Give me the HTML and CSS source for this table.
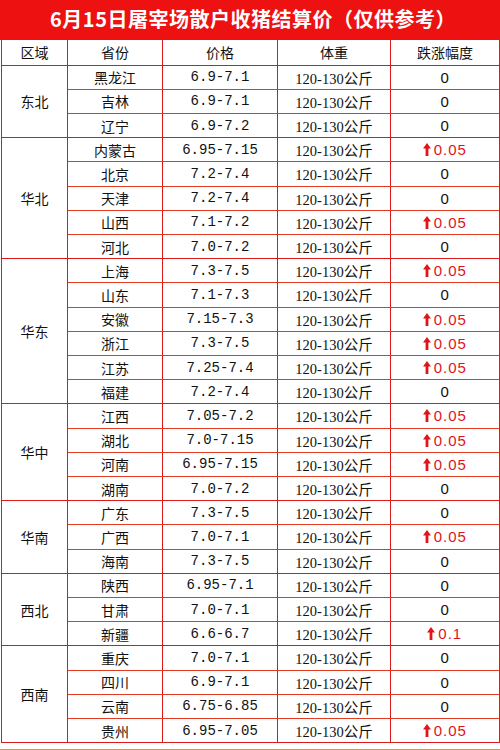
FILE: index.html
```html
<!DOCTYPE html>
<html lang="zh">
<head>
<meta charset="utf-8">
<link rel="stylesheet" href="styles.css">
</head>
<body>
<div class="page">
  <div class="title">6月15日屠宰场散户收猪结算价（仅供参考）</div>
  <table class="grid">
    <colgroup>
      <col class="c1"><col class="c2"><col class="c3"><col class="c4"><col class="c5">
    </colgroup>
    <thead>
      <tr><th>区域</th><th>省份</th><th>价格</th><th>体重</th><th>跌涨幅度</th></tr>
    </thead>
    <tbody id="body"></tbody>
  </table>
  <div class="foot"></div>
</div>
<script src="app.js"></script>
</body>
</html>
```

FILE: app.js
```js
const data = [
  ["东北", [["黑龙江","6.9-7.1",""],["吉林","6.9-7.1",""],["辽宁","6.9-7.2",""]]],
  ["华北", [["内蒙古","6.95-7.15","0.05"],["北京","7.2-7.4",""],["天津","7.2-7.4",""],["山西","7.1-7.2","0.05"],["河北","7.0-7.2",""]]],
  ["华东", [["上海","7.3-7.5","0.05"],["山东","7.1-7.3",""],["安徽","7.15-7.3","0.05"],["浙江","7.3-7.5","0.05"],["江苏","7.25-7.4","0.05"],["福建","7.2-7.4",""]]],
  ["华中", [["江西","7.05-7.2","0.05"],["湖北","7.0-7.15","0.05"],["河南","6.95-7.15","0.05"],["湖南","7.0-7.2",""]]],
  ["华南", [["广东","7.3-7.5",""],["广西","7.0-7.1","0.05"],["海南","7.3-7.5",""]]],
  ["西北", [["陕西","6.95-7.1",""],["甘肃","7.0-7.1",""],["新疆","6.6-6.7","0.1"]]],
  ["西南", [["重庆","7.0-7.1",""],["四川","6.9-7.1",""],["云南","6.75-6.85",""],["贵州","6.95-7.05","0.05"]]]
];
const arrow = '<svg class="arrow" viewBox="0 0 8 13" width="8" height="13"><path d="M4 0 L8 5.5 L5.4 5.5 L5.4 13 L2.6 13 L2.6 5.5 L0 5.5 Z" fill="#e0141a"/></svg>';
const body = document.getElementById("body");
let html = "";
data.forEach(([region, rows]) => {
  rows.forEach((r, i) => {
    const last = i === rows.length - 1;
    html += '<tr class="' + (last ? "grp-end" : "") + '">';
    if (i === 0) html += '<td class="region" rowspan="' + rows.length + '">' + region + '</td>';
    html += '<td class="prov">' + r[0] + '</td>';
    html += '<td class="price">' + r[1] + '</td>';
    html += '<td class="weight">120-130公斤</td>';
    if (r[2]) html += '<td class="chg up">' + arrow + '<span>' + r[2] + '</span></td>';
    else html += '<td class="chg">0</td>';
    html += '</tr>';
  });
});
body.innerHTML = html;
```

FILE: styles.css
```css
html, body {
  margin: 0;
  padding: 0;
  background: #fff;
}
.page {
  width: 500px;
  height: 750px;
  overflow: hidden;
}
.title {
  height: 40px;
  background: #ee1111;
  color: #fff;
  font-family: "Noto Sans CJK SC", "Liberation Sans", sans-serif;
  font-weight: 700;
  font-size: 20px;
  line-height: 38px;
  text-align: center;
  letter-spacing: 0.5px;
  padding-left: 6px;
}
.grid {
  margin-left: 1px;
  width: 498px;
  border-collapse: collapse;
  table-layout: fixed;
  font-family: "Liberation Serif", "Noto Sans CJK SC", serif;
  font-size: 14px;
  color: #111;
}
.c1 { width: 66px; }
.c2 { width: 95px; }
.c3 { width: 115px; }
.c4 { width: 113px; }
.c5 { width: 109px; }
.grid th, .grid td {
  border: 1px solid #e33a22;
  padding: 0;
  text-align: center;
  vertical-align: middle;
  white-space: nowrap;
}
.grid th {
  font-weight: 400;
  height: 24px;
  border-color: #dd1a1a;
  border-top: none;
  font-family: "Noto Sans CJK SC", serif;
}
.grid tr { height: 24.21px; }
.grid thead tr { height: 25px; }
.grid td.region {
  border: 1px solid #dd1a1a;
  font-family: "Noto Sans CJK SC", serif;
}
.grid tr.grp-end td {
  border-bottom: 1.5px solid #dd1a1a;
}
.grid td.prov {
  font-family: "Noto Sans CJK SC", serif;
  border-left-color: #dd1a1a;
  border-right-color: #dd1a1a;
}
.grid td.price {
  font-family: "Liberation Mono", monospace;
  font-size: 14px;
  border-right-color: #dd1a1a;
}
.grid td.weight {
  font-family: "Liberation Serif", "Noto Sans CJK SC", serif;
  font-size: 14.5px;
  border-right-color: #dd1a1a;
}
.grid td.chg {
  font-family: "Liberation Sans", sans-serif;
  font-size: 15px;
  border-right: 2px solid #dd1a1a;
}
.grid td.up {
  color: #e0141a;
}
.grid td.up span {
  letter-spacing: 1px;
}
.arrow {
  display: inline-block;
  vertical-align: -1px;
  margin-right: 3px;
}
.foot {
  height: 6px;
  border-bottom: 1px solid #f08a3a;
}
```
